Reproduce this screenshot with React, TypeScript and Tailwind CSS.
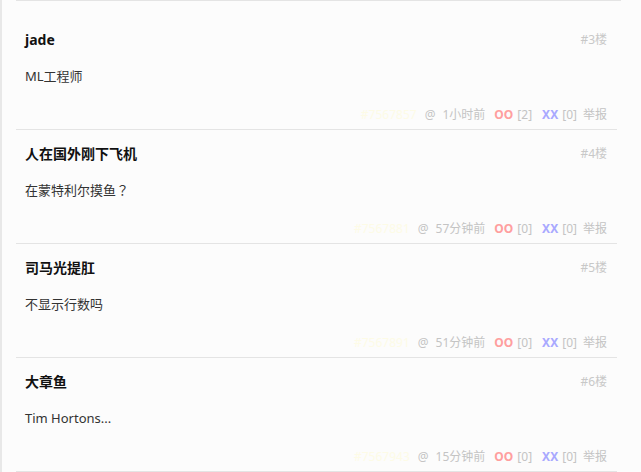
import React from "react";

type Post = {
  name: string;
  floor: string;
  content: React.ReactNode;
  id: string;
  time: string;
  oo: number;
  xx: number;
};

const cjk = { fontFamily: '"Noto Sans CJK TC", sans-serif' };

const posts: Post[] = [
  { name: "jade", floor: "#3楼", content: "ML工程师", id: "#7567857", time: "1小时前", oo: 2, xx: 0 },
  {
    name: "人在国外刚下飞机",
    floor: "#4楼",
    content: (
      <>
        在蒙特利尔摸鱼<span style={cjk}>？</span>
      </>
    ),
    id: "#7567881",
    time: "57分钟前",
    oo: 0,
    xx: 0,
  },
  { name: "司马光提肛", floor: "#5楼", content: "不显示行数吗", id: "#7567891", time: "51分钟前", oo: 0, xx: 0 },
  { name: "大章鱼", floor: "#6楼", content: "Tim Hortons...", id: "#7567943", time: "15分钟前", oo: 0, xx: 0 },
];

function Row({ p }: { p: Post }) {
  return (
    <div className="h-[114px] border-b border-[#e4e4e4] pl-[9px] pr-[10px] pt-[14px] flex flex-col">
      <div className="flex items-center justify-between h-[20px]">
        <span className="text-[14px] leading-[20px] font-bold text-[#111]">{p.name}</span>
        <span className="text-[12px] leading-[20px] text-[#c8c8c8]">{p.floor}</span>
      </div>
      <div className="mt-[16px] text-[13px] leading-[20px] text-[#333]">{p.content}</div>
      <div className="mt-[20px] flex justify-end items-center text-[12px] leading-[18px] text-[#c4c4c4] whitespace-nowrap">
        <span className="text-[#fdfbe6]">{p.id}</span>
        <span className="ml-[8px]">@</span>
        <span className="ml-[7px]">{p.time}</span>
        <span className="ml-[9px] font-bold text-[#ff9f9f]">OO</span>
        <span className="ml-[4px]">[{p.oo}]</span>
        <span className="ml-[10px] font-bold text-[#a9a9ff]">XX</span>
        <span className="ml-[4px]">[{p.xx}]</span>
        <span className="ml-[6px]">举报</span>
      </div>
    </div>
  );
}

export default function App() {
  return (
    <div
      className="flex w-[641px] h-[472px] overflow-hidden bg-[#fcfcfc]"
      style={{ fontFamily: '"Noto Sans", "Noto Sans CJK SC", sans-serif' }}
    >
      <div className="w-[2px] shrink-0 bg-[#e8e8e8]" />
      <div className="flex-1 pl-[14px] pr-[10px]">
        <div className="h-[1px] bg-[#e4e4e4] mr-[-4px]" />
        <div className="h-[15px]" />
        {posts.map((p) => (
          <Row key={p.floor} p={p} />
        ))}
      </div>
      <div className="w-[14px] shrink-0 bg-[#fcfcfc]" />
    </div>
  );
}
